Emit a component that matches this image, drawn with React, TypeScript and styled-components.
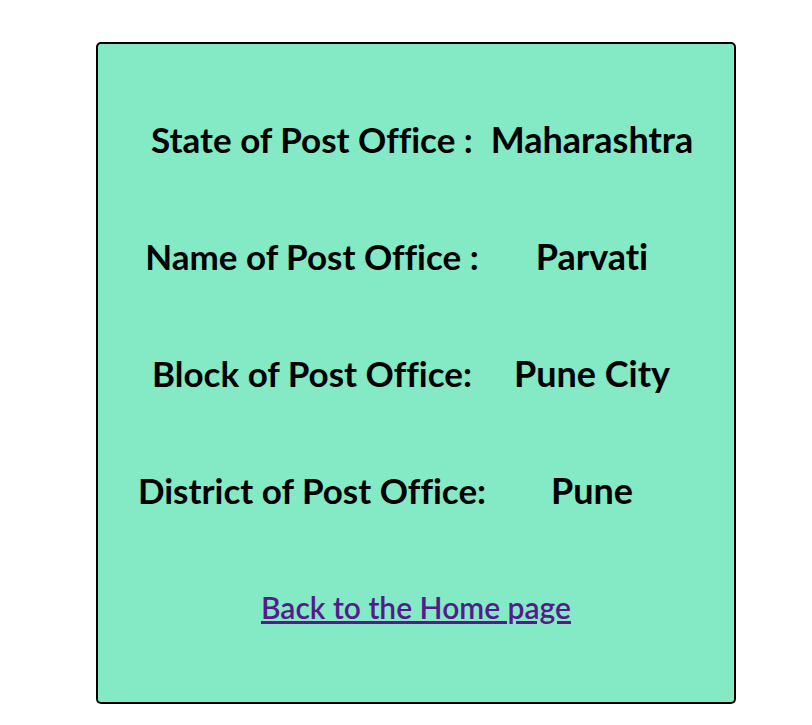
import React from "react";
import styled, { createGlobalStyle } from "styled-components";

const Global = createGlobalStyle`
  html, body { margin: 0; padding: 0; background: #ffffff; }
  body { font-family: Lato, "Noto Sans", sans-serif; }
`;

const Page = styled.div`
  padding: 42px 0 0 96px;
`;

const Card = styled.div`
  box-sizing: border-box;
  width: 640px;
  height: 662px;
  background: #84e9c5;
  border: 2px solid #000;
  border-radius: 5px;
  display: flex;
  flex-direction: column;
  align-items: center;
  padding-top: 36px;
`;

const Grid = styled.div`
  display: grid;
  grid-template-columns: 352px 208px;
  grid-auto-rows: 117px;
  align-items: center;
  justify-items: center;
`;

const Cell = styled.div<{ $value?: boolean }>`
  font-size: ${(p) => (p.$value ? "36px" : "35px")};
  font-weight: 700;
  color: #000;
  white-space: pre;
  font-variant-ligatures: none;
`;

const LinkRow = styled.div`
  height: 117px;
  display: flex;
  align-items: center;
`;

const HomeLink = styled.a`
  font-size: 30px;
  font-weight: 600;
  color: #551a8b;
  text-decoration: underline;
  font-variant-ligatures: none;
`;

const rows: [string, string][] = [
  ["State of Post Office :", "Maharashtra"],
  ["Name of Post Office :", "Parvati"],
  ["Block of Post Office:", "Pune City"],
  ["District of Post Office:", "Pune"],
];

export default function App() {
  return (
    <>
      <Global />
      <Page>
        <Card>
          <Grid>
            {rows.map(([k, v]) => (
              <React.Fragment key={k}>
                <Cell>{k}</Cell>
                <Cell $value>{v}</Cell>
              </React.Fragment>
            ))}
          </Grid>
          <LinkRow>
            <HomeLink href="#">Back to the Home page</HomeLink>
          </LinkRow>
        </Card>
      </Page>
    </>
  );
}
